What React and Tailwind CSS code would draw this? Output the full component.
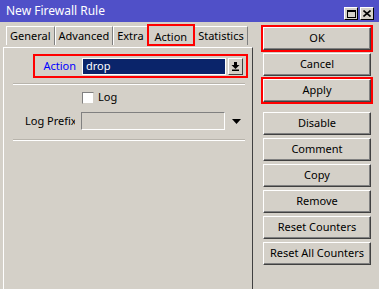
import React from "react";

const raised =
  "bg-[#d4d0c8] border border-t-white border-l-white border-r-[#404040] border-b-[#404040] shadow-[inset_-1px_-1px_#808080]";

function Btn({ label, red, className = "" }) {
  return (
    <div
      className={
        "relative h-[23px] w-[108px] flex items-center justify-center whitespace-nowrap overflow-visible text-[11px] text-black " +
        raised +
        " " +
        (red ? "outline-2 outline-[#ff0000] outline-offset-[0px] " : "") +
        className
      }
    >
      {label}
    </div>
  );
}

function Tab({ label, active, className = "" }) {
  if (active) {
    return (
      <div className="relative z-10 h-[22px] -mx-[1px] px-[6px] flex items-start pt-[3px] border-2 border-[#ff0000] bg-[#d4d0c8] text-[11px] text-black">
        {label}
      </div>
    );
  }
  return (
    <div
      className={
        "h-[19px] mt-[2px] px-[3px] flex items-center border-t border-l border-t-white border-l-white border-r border-r-[#808080] text-[11px] text-black " +
        className
      }
    >
      {label}
    </div>
  );
}

export default function App() {
  return (
    <div
      className="w-[379px] h-[289px] bg-[#d4d0c8] flex flex-col overflow-hidden"
      style={{ fontFamily: "'Noto Sans', 'DejaVu Sans', sans-serif" }}
    >
      {/* Title bar */}
      <div className="h-[22px] shrink-0 bg-[#5050c8] flex items-center pl-[6px] pr-[5px]">
        <div className="text-white text-[12px] leading-none flex-1">New Firewall Rule</div>
        <div className="flex gap-[2px] mt-[5px]">
          <div className="w-[14px] h-[13px] bg-[#d4d0c8] border border-t-white border-l-white border-r-black border-b-black flex items-center justify-center">
            <div className="w-[9px] h-[8px] border border-black border-t-2"></div>
          </div>
          <div className="w-[14px] h-[13px] bg-[#d4d0c8] border border-t-white border-l-white border-r-black border-b-black flex items-center justify-center">
            <svg width="8" height="7" viewBox="0 0 8 7">
              <path d="M0.5 0.5 L7.5 6.5 M7.5 0.5 L0.5 6.5" stroke="black" strokeWidth="1.6" />
            </svg>
          </div>
        </div>
      </div>

      <div className="flex flex-1 min-h-0">
        {/* Left: tabs + panel */}
        <div className="w-[253px] pl-[3px] flex flex-col">
          <div className="h-[24px] mt-[2px] flex items-start pl-[3px]">
            <Tab label="General" />
            <Tab label="Advanced" />
            <Tab label="Extra" />
            <Tab label="Action" active />
            <Tab label="Statistics" />
          </div>
          <div className="flex-1 border-l border-t border-l-white border-t-white border-r border-r-[#404040] -mt-[1px] pr-[8px] pl-[8px] pt-[6px]">
            {/* Action row */}
            <div className="ml-[21px] w-[215px] h-[24px] border-2 border-[#ff0000] flex items-center">
              <div className="w-[47px] text-right pr-[6px] text-[11px] text-[#0000ff]">Action</div>
              <div className="w-[144px] h-[17px] bg-[#0a246a] border border-white text-white text-[11px] flex items-center pl-[3px]">
                drop
              </div>
              <div className="ml-[2px] w-[15px] h-[17px] border border-t-white border-l-white border-r-[#404040] border-b-[#404040] flex items-center justify-center">
                <svg width="9" height="9" viewBox="0 0 9 9">
                  <path d="M3 0 H6 V3 H8.5 L4.5 7 L0.5 3 H3 Z" fill="black" />
                  <rect x="1" y="7.5" width="7" height="1.5" fill="black" />
                </svg>
              </div>
            </div>
            <div className="mt-[5px] h-[2px] border-t border-t-[#b8b4ac] border-b border-b-white w-[232px] ml-[1px]"></div>

            {/* Log checkbox */}
            <div className="mt-[6px] flex items-center ml-[70px] h-[13px]">
              <div className="w-[12px] h-[12px] bg-white border border-t-[#808080] border-l-[#808080] border-r-[#d4d0c8] border-b-[#d4d0c8]"></div>
              <div className="ml-[4px] text-[11px] text-black">Log</div>
            </div>

            {/* Log Prefix */}
            <div className="mt-[8px] flex items-center h-[18px]">
              <div className="w-[50px] ml-[13px] overflow-hidden whitespace-nowrap text-[11px] text-black">Log Prefix</div>
              <div className="ml-[6px] w-[144px] h-[18px] border border-t-[#808080] border-l-[#808080] border-r-white border-b-white bg-[#d4d0c8]"></div>
              <svg className="ml-[7px]" width="9" height="5" viewBox="0 0 9 5">
                <path d="M0 0 H9 L4.5 5 Z" fill="black" />
              </svg>
            </div>
            <div className="mt-[9px] h-[2px] border-t border-t-[#b8b4ac] border-b border-b-white w-[232px] ml-[1px]"></div>
          </div>
        </div>

        {/* Right: buttons */}
        <div className="flex-1 pl-[10px] pt-[5px] flex flex-col">
          <div className="flex flex-col gap-[3px]">
            <Btn label="OK" red />
            <Btn label="Cancel" />
            <Btn label="Apply" red />
          </div>
          <div className="flex flex-col gap-[3px] mt-[10px]">
            <Btn label="Disable" />
            <Btn label="Comment" />
            <Btn label="Copy" />
            <Btn label="Remove" />
            <Btn label="Reset Counters" />
            <Btn label="Reset All Counters" />
          </div>
        </div>
      </div>
    </div>
  );
}
